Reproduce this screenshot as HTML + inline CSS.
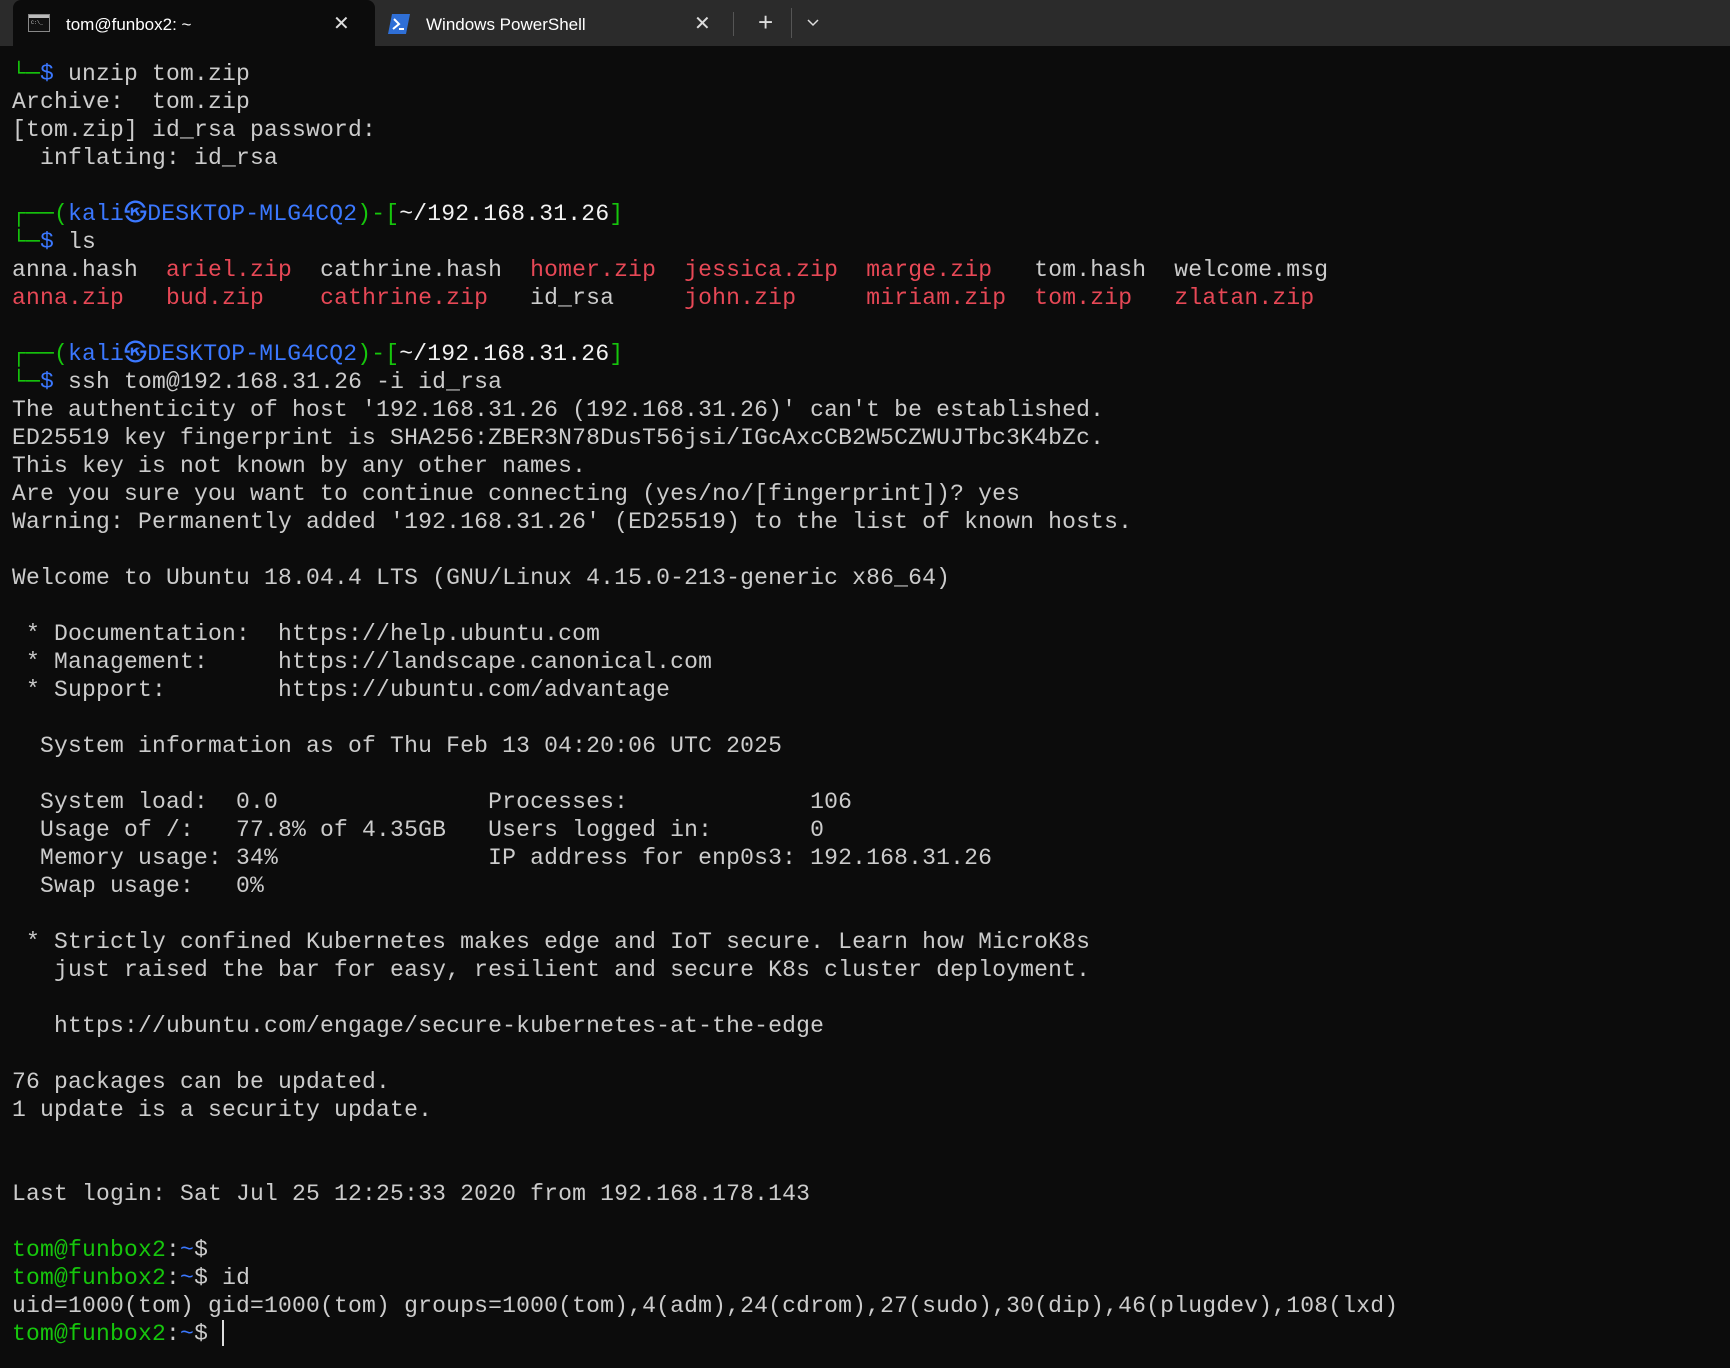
<!DOCTYPE html>
<html><head><meta charset="utf-8"><style>
html,body{margin:0;padding:0;background:#0c0c0c;width:1730px;height:1368px;overflow:hidden}
.bar{position:absolute;left:0;top:0;width:1730px;height:46px;background:#2b2b2b}
.tab{position:absolute;left:13px;top:0;width:362px;height:46px;background:#0c0c0c;border-radius:8px 8px 0 0}
.t{position:absolute;font-family:"Liberation Sans",sans-serif;font-size:17px;color:#fff;top:15px}
.x{position:absolute;top:11px;color:#ddd;font-family:"Liberation Sans",sans-serif;font-size:20px}
pre{position:absolute;left:12px;top:60px;margin:0;font-family:"Liberation Mono",monospace;font-size:23px;letter-spacing:0.2px;line-height:28px;color:#cccccc}
.g{color:#16c60c}.b{color:#3b78ff}.r{color:#e74856}.w{color:#f2f2f2}
.cur{display:inline-block;width:2px;height:26px;background:#ddd;vertical-align:-6px}
</style></head><body>
<div class="bar"></div>
<div class="tab"></div>
<svg style="position:absolute;left:28px;top:14px" width="22" height="18"><rect x="0.5" y="0.5" width="21" height="17" fill="#111" stroke="#888"/><rect x="1" y="1" width="20" height="3" fill="#bbb"/><text x="3" y="10" font-size="5" fill="#ccc" font-family="Liberation Mono">C:\_</text></svg>
<div class="t" style="left:66px">tom@funbox2: ~</div>
<div class="x" style="left:333px">✕</div>
<svg style="position:absolute;left:388px;top:14px" width="22" height="20"><polygon points="4,0 22,0 18,20 0,20" fill="#2f6fd6"/><polyline points="6,5 11,10 5,15" stroke="#fff" stroke-width="2" fill="none"/><line x1="11" y1="15" x2="16" y2="15" stroke="#fff" stroke-width="2"/></svg>
<div class="t" style="left:426px">Windows PowerShell</div>
<div class="x" style="left:694px">✕</div>
<div style="position:absolute;left:733px;top:12px;width:1px;height:24px;background:#555"></div>
<div class="x" style="left:758px;top:7px;font-size:26px;font-weight:300">+</div>
<div style="position:absolute;left:791px;top:8px;width:1px;height:30px;background:#555"></div>
<svg style="position:absolute;left:807px;top:19px" width="12" height="8"><polyline points="1,1 6,6 11,1" stroke="#ddd" stroke-width="1.5" fill="none"/></svg>
<pre><span class="g">└─</span><span class="b">$</span> unzip tom.zip
Archive:  tom.zip
[tom.zip] id_rsa password: 
  inflating: id_rsa                  

<span class="g">┌──(</span><span class="b">kali㉿DESKTOP-MLG4CQ2</span><span class="g">)-[</span><span class="w">~/192.168.31.26</span><span class="g">]</span>
<span class="g">└─</span><span class="b">$</span> ls
anna.hash  <span class="r">ariel.zip</span>  cathrine.hash  <span class="r">homer.zip</span>  <span class="r">jessica.zip</span>  <span class="r">marge.zip</span>   tom.hash  welcome.msg
<span class="r">anna.zip</span>   <span class="r">bud.zip</span>    <span class="r">cathrine.zip</span>   id_rsa     <span class="r">john.zip</span>     <span class="r">miriam.zip</span>  <span class="r">tom.zip</span>   <span class="r">zlatan.zip</span>

<span class="g">┌──(</span><span class="b">kali㉿DESKTOP-MLG4CQ2</span><span class="g">)-[</span><span class="w">~/192.168.31.26</span><span class="g">]</span>
<span class="g">└─</span><span class="b">$</span> ssh tom@192.168.31.26 -i id_rsa
The authenticity of host '192.168.31.26 (192.168.31.26)' can't be established.
ED25519 key fingerprint is SHA256:ZBER3N78DusT56jsi/IGcAxcCB2W5CZWUJTbc3K4bZc.
This key is not known by any other names.
Are you sure you want to continue connecting (yes/no/[fingerprint])? yes
Warning: Permanently added '192.168.31.26' (ED25519) to the list of known hosts.

Welcome to Ubuntu 18.04.4 LTS (GNU/Linux 4.15.0-213-generic x86_64)

 * Documentation:  https://help.ubuntu.com
 * Management:     https://landscape.canonical.com
 * Support:        https://ubuntu.com/advantage

  System information as of Thu Feb 13 04:20:06 UTC 2025

  System load:  0.0               Processes:             106
  Usage of /:   77.8% of 4.35GB   Users logged in:       0
  Memory usage: 34%               IP address for enp0s3: 192.168.31.26
  Swap usage:   0%

 * Strictly confined Kubernetes makes edge and IoT secure. Learn how MicroK8s
   just raised the bar for easy, resilient and secure K8s cluster deployment.

   https://ubuntu.com/engage/secure-kubernetes-at-the-edge

76 packages can be updated.
1 update is a security update.


Last login: Sat Jul 25 12:25:33 2020 from 192.168.178.143

<span class="g">tom@funbox2</span>:<span class="b">~</span>$ 
<span class="g">tom@funbox2</span>:<span class="b">~</span>$ id
uid=1000(tom) gid=1000(tom) groups=1000(tom),4(adm),24(cdrom),27(sudo),30(dip),46(plugdev),108(lxd)
<span class="g">tom@funbox2</span>:<span class="b">~</span>$ <span class="cur"></span></pre>
</body></html>
